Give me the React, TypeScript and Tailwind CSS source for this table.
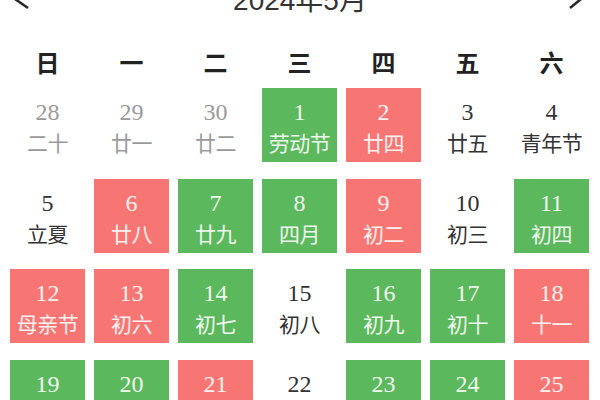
type Kind = "prev" | "plain" | "green" | "red";
type Day = { n: number; lunar: string; kind: Kind };

const weekdays = ["日", "一", "二", "三", "四", "五", "六"];

const rows: Day[][] = [
  [
    { n: 28, lunar: "二十", kind: "prev" },
    { n: 29, lunar: "廿一", kind: "prev" },
    { n: 30, lunar: "廿二", kind: "prev" },
    { n: 1, lunar: "劳动节", kind: "green" },
    { n: 2, lunar: "廿四", kind: "red" },
    { n: 3, lunar: "廿五", kind: "plain" },
    { n: 4, lunar: "青年节", kind: "plain" },
  ],
  [
    { n: 5, lunar: "立夏", kind: "plain" },
    { n: 6, lunar: "廿八", kind: "red" },
    { n: 7, lunar: "廿九", kind: "green" },
    { n: 8, lunar: "四月", kind: "green" },
    { n: 9, lunar: "初二", kind: "red" },
    { n: 10, lunar: "初三", kind: "plain" },
    { n: 11, lunar: "初四", kind: "green" },
  ],
  [
    { n: 12, lunar: "母亲节", kind: "red" },
    { n: 13, lunar: "初六", kind: "red" },
    { n: 14, lunar: "初七", kind: "green" },
    { n: 15, lunar: "初八", kind: "plain" },
    { n: 16, lunar: "初九", kind: "green" },
    { n: 17, lunar: "初十", kind: "green" },
    { n: 18, lunar: "十一", kind: "red" },
  ],
  [
    { n: 19, lunar: "十二", kind: "green" },
    { n: 20, lunar: "十三", kind: "green" },
    { n: 21, lunar: "小满", kind: "red" },
    { n: 22, lunar: "十五", kind: "plain" },
    { n: 23, lunar: "十六", kind: "green" },
    { n: 24, lunar: "十七", kind: "green" },
    { n: 25, lunar: "十八", kind: "red" },
  ],
];

const boxClass: Record<Kind, string> = {
  prev: "text-[#9a9a9a]",
  plain: "text-[#333333]",
  green: "bg-[#5cb85c] text-white/90",
  red: "bg-[#f77673] text-white/90",
};

function Cell({ d }: { d: Day }) {
  return (
    <div className={`h-[74px] flex flex-col items-center pt-[9px] ${boxClass[d.kind]}`}>
      <div className="text-[24px] leading-[30px] font-['Liberation_Serif',serif]">{d.n}</div>
      <div className="text-[21px] leading-[30px] tracking-[-0.5px]">{d.lunar}</div>
    </div>
  );
}

export default function App() {
  return (
    <div className="w-[600px] h-[400px] overflow-hidden bg-white font-['Noto_Sans_CJK_SC','Noto_Sans',sans-serif]">
      {/* month switcher, mostly cut off at the top */}
      <div className="-mt-[10px] h-[30px] flex items-center justify-between text-[#333]">
        <svg width="40" height="30" viewBox="0 0 40 30" fill="none" stroke="#2a2a2a" strokeWidth="2.6">
          <path d="M28 0 L15 9 L28 18" />
        </svg>
        <div className="-mt-[8px] text-[28px] leading-[30px] text-[#333] font-['Liberation_Sans','Noto_Sans_CJK_SC',sans-serif]">
          2024年5月
        </div>
        <svg width="40" height="30" viewBox="0 0 40 30" fill="none" stroke="#2a2a2a" strokeWidth="2.6">
          <path d="M10 0 L21 9 L10 18" />
        </svg>
      </div>

      <div className="mt-[22px] h-[40px] px-[10px] grid grid-cols-[repeat(7,75px)] gap-x-[9px]">
        {weekdays.map((w) => (
          <div key={w} className="text-center text-[24px] leading-[40px] font-bold text-[#222]">
            {w}
          </div>
        ))}
      </div>

      <div className="mt-[6px] px-[10px] grid grid-cols-[repeat(7,75px)] gap-x-[9px] gap-y-[16.5px]">
        {rows.flat().map((d, i) => (
          <Cell key={i} d={d} />
        ))}
      </div>
    </div>
  );
}
